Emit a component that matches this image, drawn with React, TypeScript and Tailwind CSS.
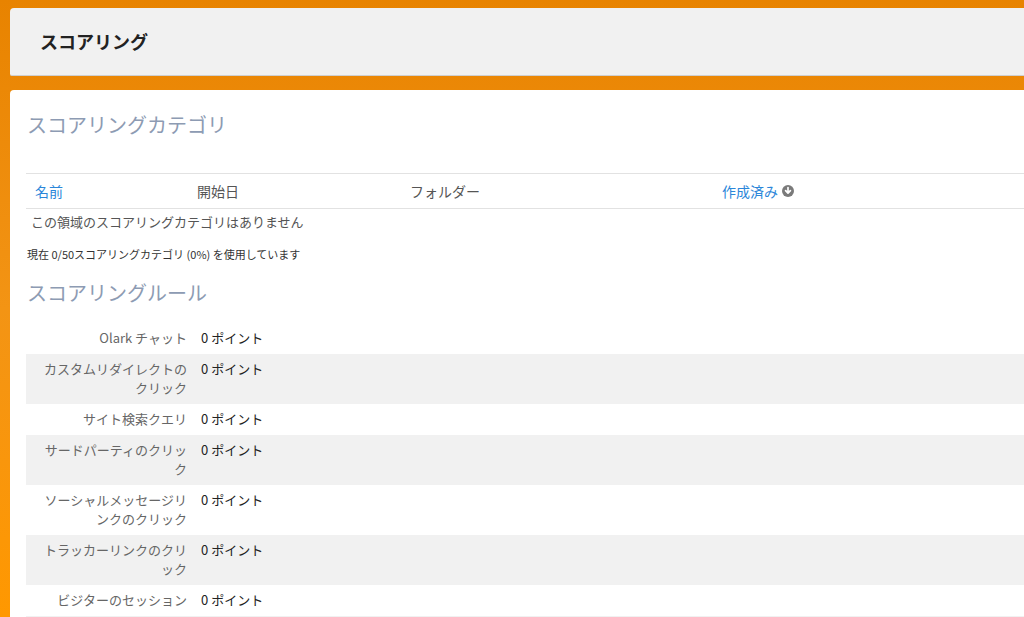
const rules = [
  { label: "Olark チャット", points: 0 },
  { label: "カスタムリダイレクトのクリック", points: 0 },
  { label: "サイト検索クエリ", points: 0 },
  { label: "サードパーティのクリック", points: 0 },
  { label: "ソーシャルメッセージリンクのクリック", points: 0 },
  { label: "トラッカーリンクのクリック", points: 0 },
  { label: "ビジターのセッション", points: 0 },
];

function SortIcon() {
  return (
    <svg width="12" height="12" viewBox="0 0 12 12" className="ml-[4px] inline-block">
      <circle cx="6" cy="6" r="6" fill="#7a7a7a" />
      <path d="M6 2.6v5.2M3.6 5.6 6 8.2l2.4-2.6" stroke="#fff" strokeWidth="1.7" fill="none" strokeLinecap="round" strokeLinejoin="round" />
    </svg>
  );
}

export default function App() {
  return (
    <div
      className="h-screen overflow-hidden bg-linear-to-b from-[#e88300] via-[#f39414] to-[#ff9800] pl-[10px] pt-[8px]"
      style={{ fontFamily: '"Noto Sans CJK JP", "Noto Sans", sans-serif' }}
    >
      <header className="flex h-[68px] items-center rounded-tl-[4px] rounded-bl-[2px] border-b border-[#cfcfcf] bg-[#f1f1f1] pl-[30px]">
        <h1 className="text-[18px] font-bold text-[#222]">スコアリング</h1>
      </header>

      <main className="mt-[14px] min-h-[600px] rounded-tl-[4px] bg-white pl-[16px] pt-[21px]">
        <h2 className="pl-[1px] text-[20px] leading-[28px] text-[#8d9bb3]">スコアリングカテゴリ</h2>

        <div className="mt-[34px] grid h-[36px] grid-cols-[162px_213px_312px_1fr] items-center border-y border-[#e2e2e2] text-[14px]">
          <span className="pl-[9px] text-[#2b86d9]">名前</span>
          <span className="pl-[9px] text-[#555]">開始日</span>
          <span className="pl-[9px] text-[#555]">フォルダー</span>
          <span className="flex items-center pl-[9px] text-[#2b86d9]">
            作成済み
            <SortIcon />
          </span>
        </div>
        <p className="mt-[4px] pl-[5px] text-[13px] leading-[18px] text-[#555]">この領域のスコアリングカテゴリはありません</p>
        <p className="mt-[16px] pl-[1px] text-[11px] leading-[14px] text-[#333]">現在 0/50スコアリングカテゴリ (0%) を使用しています</p>

        <h2 className="mt-[18px] pl-[1px] text-[20px] leading-[28px] text-[#8d9bb3]">スコアリングルール</h2>

        <div className="mt-[16px]">
          {rules.map((r, i) => (
            <div key={r.label} className={`flex pt-[5px] pb-[7px] text-[13px] leading-[19px] ${i % 2 === 1 ? "bg-[#f1f1f1]" : "bg-white"}`}>
              <div className="w-[164px] shrink-0 pl-[13px] pr-[3px] text-right text-[#666]">{r.label}</div>
              <div className="pl-[11px] text-[#222]">{r.points} ポイント</div>
            </div>
          ))}
          <div className="h-[31px] bg-[#f1f1f1]" />
        </div>
      </main>
    </div>
  );
}
